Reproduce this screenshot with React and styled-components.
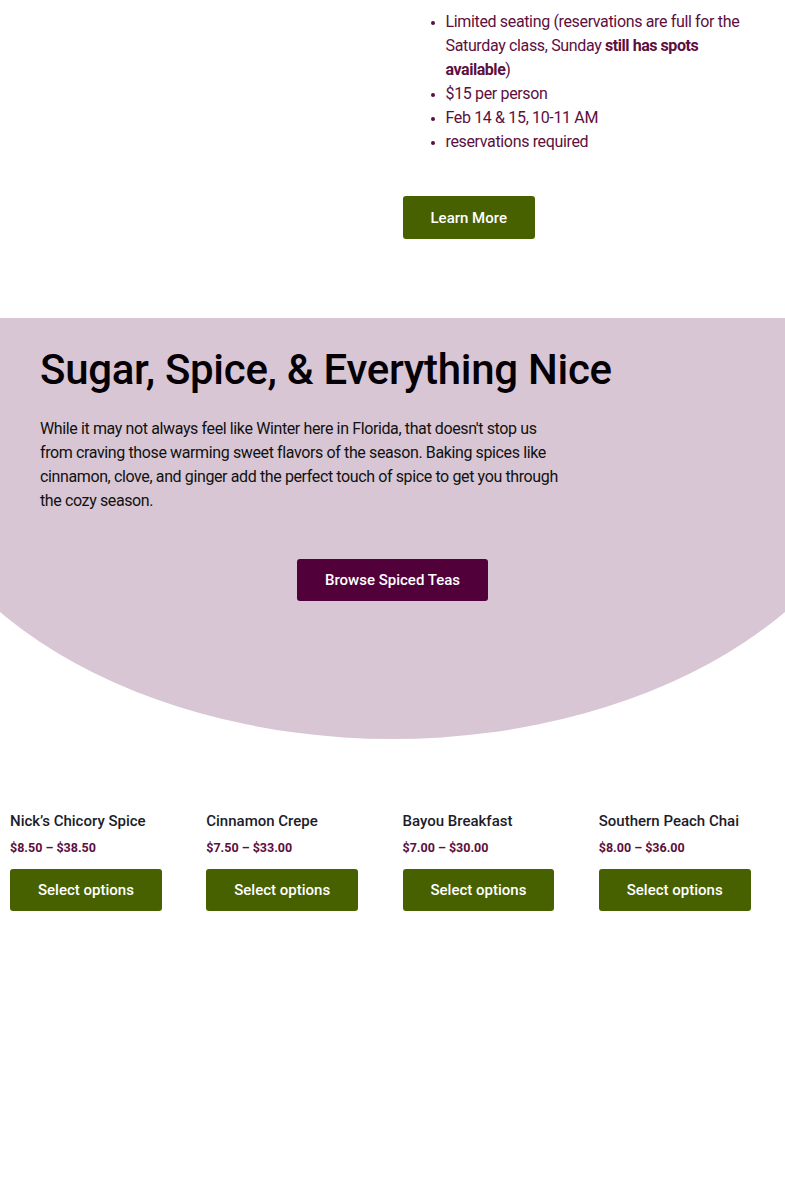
import React from 'react';
import styled, { createGlobalStyle } from 'styled-components';

const GlobalStyle = createGlobalStyle`
  * { box-sizing: border-box; }
  body { margin: 0; background: #fff; font-family: Roboto, 'Liberation Sans', Arial, sans-serif; }
`;

const Page = styled.div`width: 785px; min-height: 1196px; background: #fff;`;

const ClassSection = styled.section`display: grid; grid-template-columns: 1fr 1fr; padding: 10px 0 79px;`;
const ClassInfo = styled.div`grid-column: 2; padding-left: 10px;`;
const Details = styled.ul`
  margin: 0 0 42px;
  padding: 0 40px 0 43px;
  color: #5c0f40;
  font-size: 16px;
  line-height: 24px;
  letter-spacing: -0.35px;
  li::marker { font-size: 14px; }
  strong { font-weight: 700; letter-spacing: -0.45px; }
`;

const Button = styled.a`
  display: inline-flex;
  align-items: center;
  justify-content: center;
  height: ${({ $h }) => $h || 42}px;
  padding: 0 28px;
  border-radius: 3px;
  background: ${({ $tone }) => ($tone === 'plum' ? '#52003a' : '#476100')};
  color: #fff;
  font-size: 15px;
  font-weight: 500;
  text-decoration: none;
  cursor: pointer;
`;

const SpiceSection = styled.section`
  height: 421px;
  background: #d8c6d4;
  padding: 27px 40px 0;
  clip-path: ellipse(500px 334px at 50% 87px);
`;
const Title = styled.h2`
  margin: 0 0 22px;
  font-size: 42px;
  line-height: 50px;
  font-weight: 500;
  letter-spacing: -0.3px;
  color: #050005;
`;
const Intro = styled.p`
  margin: 0 0 46px;
  max-width: 530px;
  font-size: 16px;
  line-height: 24px;
  letter-spacing: -0.38px;
  color: #111;
`;
const Center = styled.div`display: flex; justify-content: center;`;

const Products = styled.div`
  display: grid;
  grid-template-columns: repeat(4, 1fr);
  gap: 20px;
  padding: 72px 10px 0;
`;
const Product = styled.div`display: flex; flex-direction: column; align-items: flex-start;`;
const Name = styled.h3`
  margin: 0 0 7px;
  font-size: 15px;
  line-height: 20px;
  font-weight: 500;
  color: #1c1c2a;
`;
const Price = styled.div`
  margin-bottom: 11px;
  font-size: 12.5px;
  line-height: 20px;
  font-weight: 700;
  color: #5c0f40;
`;

const products = [
  { name: 'Nick\u2019s Chicory Spice', price: '$8.50 \u2013 $38.50' },
  { name: 'Cinnamon Crepe', price: '$7.50 \u2013 $33.00' },
  { name: 'Bayou Breakfast', price: '$7.00 \u2013 $30.00' },
  { name: 'Southern Peach Chai', price: '$8.00 \u2013 $36.00' },
];

export default function App() {
  return (
    <Page>
      <GlobalStyle />
      <ClassSection>
        <ClassInfo>
          <Details>
            <li>Limited seating (reservations are full for the Saturday class, Sunday <strong>still has spots available</strong>)</li>
            <li>$15 per person</li>
            <li>Feb 14 &amp; 15, 10-11 AM</li>
            <li>reservations required</li>
          </Details>
          <Button $h={43}>Learn More</Button>
        </ClassInfo>
      </ClassSection>

      <SpiceSection>
        <Title>Sugar, Spice, &amp; Everything Nice</Title>
        <Intro>
          While it may not always feel like Winter here in Florida, that doesn't stop us from craving those warming sweet flavors of the season. Baking spices like cinnamon, clove, and ginger add the perfect touch of spice to get you through the cozy season.
        </Intro>
        <Center>
          <Button $tone="plum">Browse Spiced Teas</Button>
        </Center>
      </SpiceSection>

      <Products>
        {products.map((p) => (
          <Product key={p.name}>
            <Name>{p.name}</Name>
            <Price>{p.price}</Price>
            <Button>Select options</Button>
          </Product>
        ))}
      </Products>
    </Page>
  );
}
